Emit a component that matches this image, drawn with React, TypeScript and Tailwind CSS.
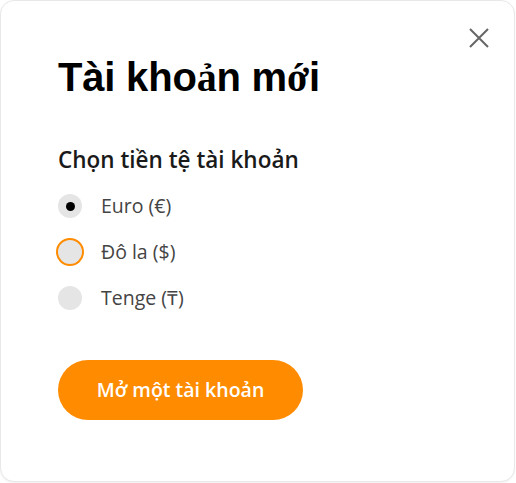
import React, { useState } from "react";

const options = [
  { id: "eur", label: "Euro (€)" },
  { id: "usd", label: "Đô la ($)" },
  { id: "kzt", label: "Tenge (₸)" },
];

export default function App() {
  const [sel, setSel] = useState("eur");
  const focused = "usd";
  const serif = "font-['Liberation_Serif',serif]";
  return (
    <div className="w-[516px] h-[483px] bg-white">
      <div className="relative w-[515px] h-[482px] bg-white border border-[#e8e8e8] rounded-[14px] shadow-[0_1px_2px_rgba(0,0,0,0.06)] pl-[57px] pt-[52px] flex flex-col">
        <button className="absolute right-[24px] top-[26px] w-[22px] h-[22px] text-[#666]" aria-label="Đóng">
          <svg viewBox="0 0 22 22" width="22" height="22" fill="none" stroke="currentColor" strokeWidth="2" strokeLinecap="butt">
            <path d="M2 2 L20 20 M20 2 L2 20" />
          </svg>
        </button>
        <h1 className="text-[40px] leading-[48px] font-bold text-black tracking-[-0.2px] font-['Liberation_Sans',Arial,sans-serif]">
          Tài kho<span className={serif}>ả</span>n m<span className={serif}>ớ</span>i
        </h1>
        <div className="font-['Open_Sans',sans-serif] mt-[44px]">
          <p className="text-[22.5px] leading-[28px] font-semibold text-[#1a1a1a]">Chọn tiền tệ tài khoản</p>
          <div className="flex flex-col gap-[20px] mt-[19px]">
            {options.map((o) => (
              <label key={o.id} className="flex items-center gap-[19px] h-[26px] cursor-pointer" onClick={() => setSel(o.id)}>
                <span
                  className={
                    o.id === focused
                      ? "w-[28px] h-[28px] -ml-[2px] -mr-[2px] rounded-full bg-[#e5e5e5] border-2 border-[#ff8c00] flex items-center justify-center"
                      : "w-[24px] h-[24px] rounded-full bg-[#e5e5e5] flex items-center justify-center"
                  }
                >
                  {sel === o.id && <span className="w-[9px] h-[9px] rounded-full bg-black" />}
                </span>
                <span className="text-[19.5px] leading-[26px] text-[#444]">{o.label}</span>
              </label>
            ))}
          </div>
          <button className="mt-[49px] w-[245px] h-[60px] rounded-full bg-[#ff8c00] text-white text-[19.5px] font-semibold">
            Mở một tài khoản
          </button>
        </div>
      </div>
    </div>
  );
}
